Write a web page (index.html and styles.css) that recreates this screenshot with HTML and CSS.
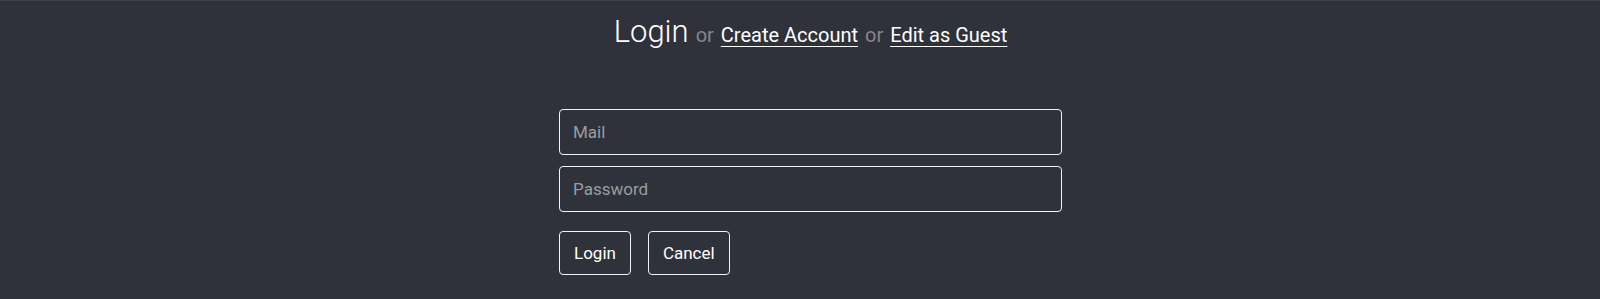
FILE: index.html
```html
<!DOCTYPE html>
<html lang="en">
<head>
<meta charset="UTF-8">
<title>Login</title>
<link rel="stylesheet" href="styles.css">
</head>
<body>
    <div class="page">
        <h1 class="title">
            <span class="big">Login</span>
            <span class="or">or</span>
            <a href="#">Create Account</a>
            <span class="or">or</span>
            <a href="#">Edit as Guest</a>
        </h1>
        <form class="login-form">
            <input type="text" placeholder="Mail">
            <input type="password" placeholder="Password">
            <div class="buttons">
                <button type="submit">Login</button>
                <button type="button">Cancel</button>
            </div>
        </form>
    </div>
</body>
</html>
```

FILE: styles.css
```css
body {
    margin: 0;
    padding: 0;
    background-color: #2f323a;
    border-top: 1px solid #3d4048;
    font-family: Roboto, "Liberation Sans", sans-serif;
    color: #fff;
}
.page {
    display: flex;
    flex-direction: column;
    align-items: center;
    padding-left: 21px;
}
.title {
    margin: 11px 0 0;
    font-weight: normal;
    font-size: 20px;
    line-height: 40px;
    display: flex;
    align-items: baseline;
    gap: 7px;
}
.title .big {
    font-size: 31px;
    font-weight: 300;
}
.title .or {
    color: #85878c;
}
.title a {
    color: #fff;
    text-decoration: underline;
    text-underline-offset: 4px;
    text-decoration-thickness: 1px;
}
.login-form {
    width: 503px;
    margin-top: 54px;
    display: flex;
    flex-direction: column;
    gap: 11px;
}
.login-form input {
    box-sizing: border-box;
    height: 46px;
    padding: 0 13px;
    background: transparent;
    border: 1px solid #f2f2f2;
    border-radius: 4px;
    color: #fff;
    font-family: inherit;
    font-size: 17px;
}
.login-form input::placeholder {
    color: #9a9ca1;
}
.buttons {
    display: flex;
    gap: 17px;
    margin-top: 8px;
}
.buttons button {
    height: 44px;
    padding: 0 14px;
    background: transparent;
    border: 1px solid #f2f2f2;
    border-radius: 4px;
    color: #fff;
    font-family: inherit;
    font-size: 17px;
    cursor: pointer;
}
```
